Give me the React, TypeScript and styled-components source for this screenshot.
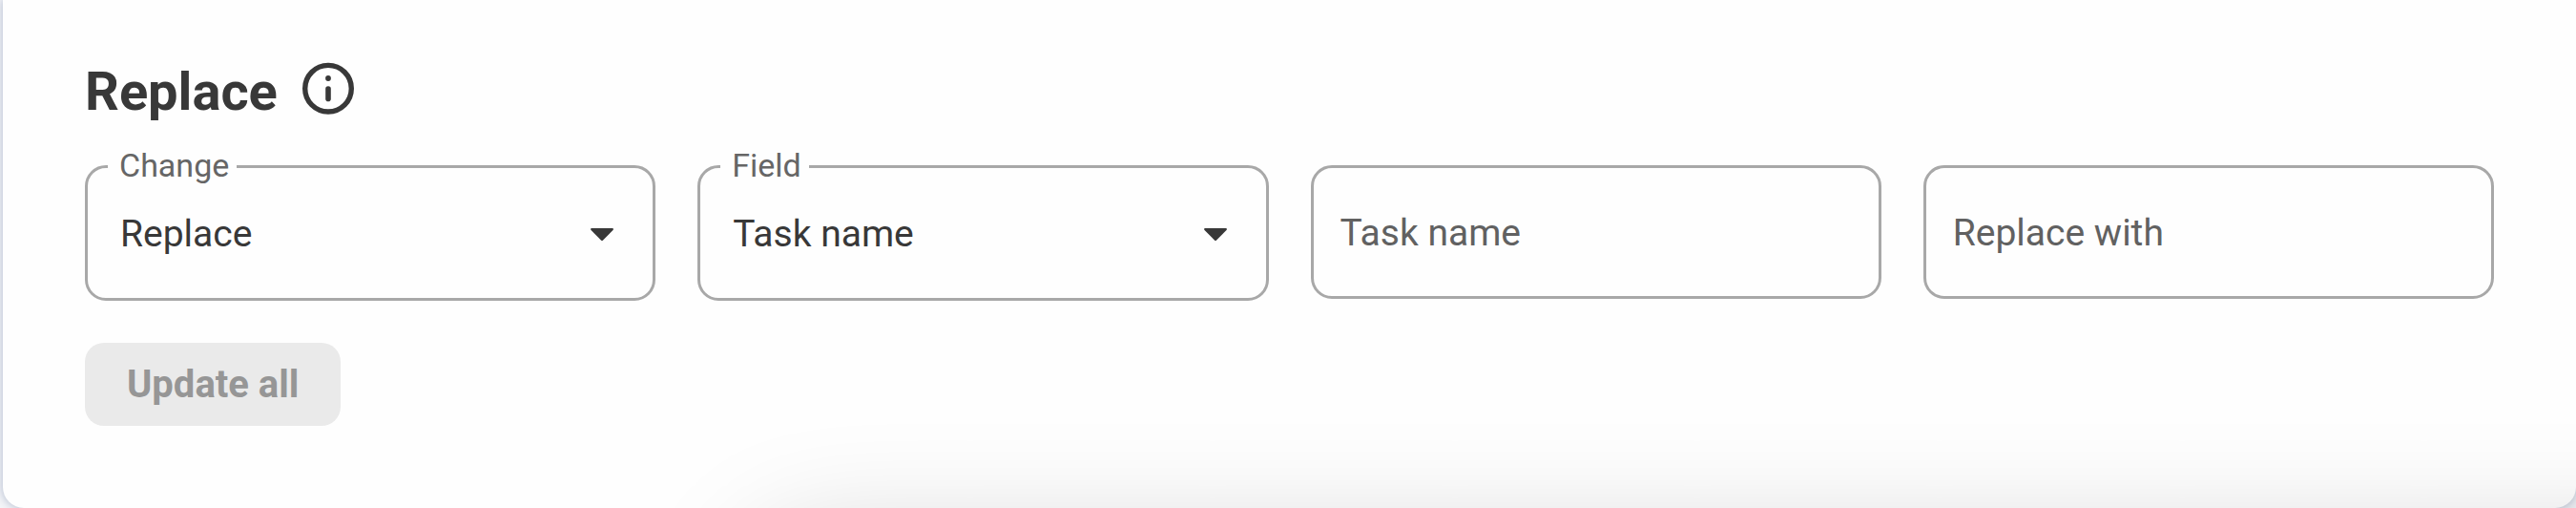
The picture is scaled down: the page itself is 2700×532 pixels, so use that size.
import React, { useId, useState } from "react";
import styled, { createGlobalStyle } from "styled-components";

const GlobalStyle = createGlobalStyle`
  *, *::before, *::after {
    box-sizing: border-box;
  }
  body {
    margin: 0;
    background: #f4f5f8;
    font-family: Roboto, "Liberation Sans", sans-serif;
    color: #383838;
  }
`;

const Page = styled.main`
  position: relative;
  overflow: hidden;
  background: #f4f5f8;
`;

const Card = styled.section`
  display: flex;
  flex-direction: column;
  align-items: stretch;
  gap: 44px;
  margin-left: 3px;
  padding: 63px 86px 86px;
  background: #fefefe;
  border-radius: 0 0 22px 22px;
  box-shadow: 0 0 10px 1px #b9c1d2;
`;

const Header = styled.header`
  display: flex;
  align-items: flex-start;
  gap: 24px;
`;

const Title = styled.h2`
  margin: 0;
  font-size: 56px;
  line-height: 66px;
  font-weight: 700;
`;

const InfoButton = styled.button`
  display: flex;
  padding: 0;
  border: 0;
  background: none;
  color: inherit;
  cursor: pointer;
`;

const Fields = styled.div`
  display: grid;
  grid-template-columns: repeat(4, minmax(0, 1fr));
  align-items: start;
  gap: 44px;
`;

const FieldBox = styled.div`
  position: relative;
  display: flex;
  align-items: center;
`;

const FloatingLabel = styled.label`
  position: absolute;
  top: -20px;
  left: 24px;
  padding: 0 8px 0 12px;
  background: #fefefe;
  color: #666;
  font-size: 34px;
  line-height: 40px;
`;

const Select = styled.select`
  appearance: none;
  width: 100%;
  height: 142px;
  padding: 2px 80px 0 34px;
  border: 3px solid #a8a8a8;
  border-radius: 22px;
  background: transparent;
  color: #383838;
  font-family: inherit;
  font-size: 39px;
`;

const Caret = styled.svg`
  position: absolute;
  right: 44px;
  pointer-events: none;
`;

const TextInput = styled.input`
  width: 100%;
  height: 140px;
  padding: 2px 28px 0;
  border: 3px solid #a8a8a8;
  border-radius: 22px;
  background: transparent;
  color: #383838;
  font-family: inherit;
  font-size: 39px;

  &::placeholder {
    color: #616161;
    opacity: 1;
  }
`;

const SubmitButton = styled.button`
  align-self: flex-start;
  padding: 20px 44px 19px;
  border: 0;
  border-radius: 20px;
  background: #eaeaea;
  color: #969696;
  font-family: inherit;
  font-size: 40px;
  line-height: 48px;
  font-weight: 700;
`;

const BottomShade = styled.div`
  position: absolute;
  top: calc(100% + 28px);
  left: 780px;
  right: -200px;
  height: 300px;
  border-radius: 80px;
  box-shadow: 0 0 120px rgba(0, 0, 0, 0.17);
  pointer-events: none;
`;

function InfoIcon() {
  return (
    <svg width="58" height="60" viewBox="0 0 58 60" fill="none" aria-hidden="true">
      <circle cx="29" cy="29.7" r="24.3" stroke="currentColor" strokeWidth="5.4" />
      <circle cx="29" cy="19" r="2.9" fill="currentColor" />
      <path d="M29 30V40.4" stroke="currentColor" strokeWidth="5.6" strokeLinecap="round" />
    </svg>
  );
}

interface SelectFieldProps {
  label: string;
  options: string[];
}

function SelectField({ label, options }: SelectFieldProps) {
  const id = useId();
  const [value, setValue] = useState(options[0]);
  return (
    <FieldBox>
      <Select id={id} value={value} onChange={(e) => setValue(e.target.value)}>
        {options.map((option) => (
          <option key={option}>{option}</option>
        ))}
      </Select>
      <FloatingLabel htmlFor={id}>{label}</FloatingLabel>
      <Caret width="24" height="18" viewBox="0 0 24 18" aria-hidden="true">
        <path
          d="M1.2 4H22.8C23.9 4 24.2 5.2 23.5 6L13.1 16.4Q12 17.4 10.9 16.4L0.5 6C-0.2 5.2 0.1 4 1.2 4Z"
          fill="#383838"
        />
      </Caret>
    </FieldBox>
  );
}

function TextField({ label }: { label: string }) {
  return (
    <FieldBox>
      <TextInput type="text" aria-label={label} placeholder={label} />
    </FieldBox>
  );
}

export default function App() {
  return (
    <>
      <GlobalStyle />
      <Page>
        <Card>
          <Header>
            <Title>Replace</Title>
            <InfoButton type="button" aria-label="Information">
              <InfoIcon />
            </InfoButton>
          </Header>
          <Fields>
            <SelectField label="Change" options={["Replace"]} />
            <SelectField label="Field" options={["Task name"]} />
            <TextField label="Task name" />
            <TextField label="Replace with" />
          </Fields>
          <SubmitButton type="button" disabled>
            Update all
          </SubmitButton>
        </Card>
        <BottomShade />
      </Page>
    </>
  );
}
